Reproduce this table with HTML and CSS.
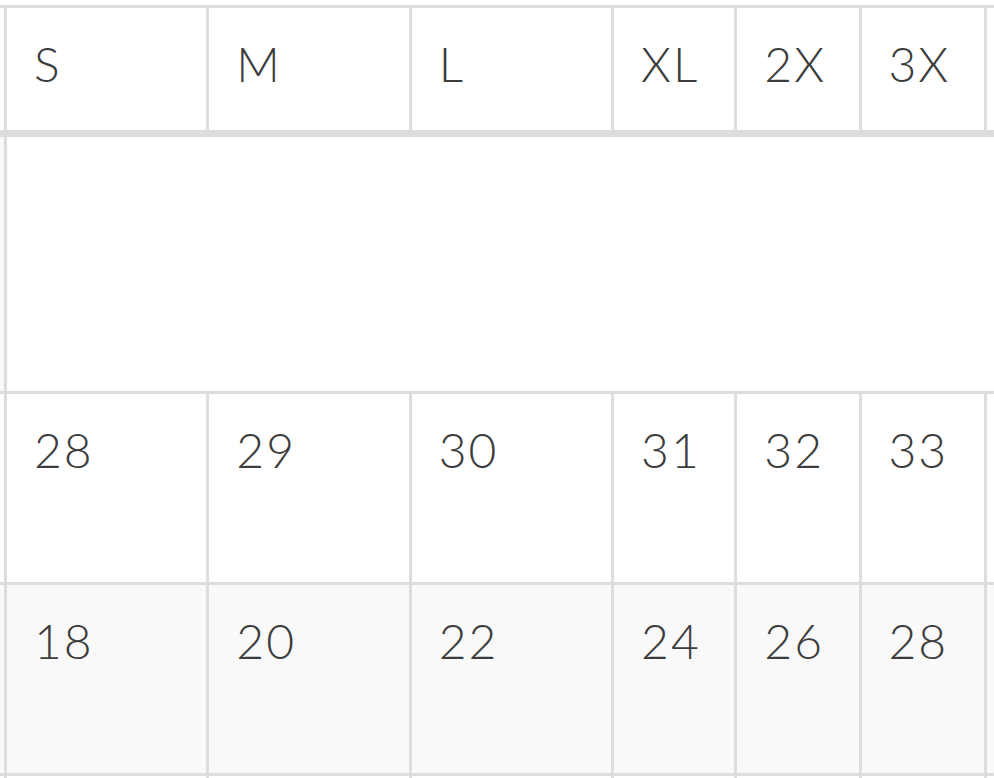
FILE: index.html
```html
<!DOCTYPE html>
<html lang="en">
<head>
<meta charset="utf-8">
<title>Size chart</title>
<link rel="stylesheet" href="styles.css">
</head>
<body>
<div class="viewport">
  <table class="size-table">
    <thead>
      <tr>
        <th class="stub"></th>
        <th class="col-wide">S</th>
        <th class="col-wide">M</th>
        <th class="col-wide">L</th>
        <th class="col-xl">XL</th>
        <th class="col-2x">2X</th>
        <th class="col-3x">3X</th>
        <th class="col-more"></th>
      </tr>
    </thead>
    <tbody>
      <tr class="row-blank">
        <td class="stub"></td>
        <td class="blank-cell" colspan="7"></td>
      </tr>
      <tr class="row-data">
        <td class="stub"></td>
        <td>28</td>
        <td>29</td>
        <td>30</td>
        <td>31</td>
        <td>32</td>
        <td>33</td>
        <td></td>
      </tr>
      <tr class="row-data row-striped">
        <td class="stub"></td>
        <td>18</td>
        <td>20</td>
        <td>22</td>
        <td>24</td>
        <td>26</td>
        <td>28</td>
        <td></td>
      </tr>
      <tr class="row-data">
        <td class="stub"></td>
        <td></td>
        <td></td>
        <td></td>
        <td></td>
        <td></td>
        <td></td>
        <td></td>
      </tr>
    </tbody>
  </table>
</div>
</body>
</html>
```

FILE: styles.css
```css
html, body {
  margin: 0;
  padding: 0;
  background: #ffffff;
  overflow: hidden;
}

.viewport {
  width: 994px;
  height: 778px;
  overflow: hidden;
  padding-top: 5px;
  box-sizing: border-box;
}

.size-table {
  border-collapse: separate;
  border-spacing: 0;
  table-layout: fixed;
  width: 1107px;
  font-family: Lato, "Open Sans", sans-serif;
  font-weight: 300;
  font-size: 48px;
  line-height: 72px;
  letter-spacing: 2px;
  color: #3c3c3c;
}

.size-table th,
.size-table td {
  box-sizing: border-box;
  border-left: 3px solid #dddddd;
  padding: 20px 0 0 27px;
  text-align: left;
  vertical-align: top;
  font-weight: 300;
}

.size-table .stub {
  border-left: 0;
  padding: 0;
  width: 4px;
}

.col-wide { width: 202px; }
.col-xl   { width: 123px; }
.col-2x   { width: 124px; }
.col-3x   { width: 125px; }
.col-more { width: 123px; }

.size-table thead th {
  border-top: 3px solid #dddddd;
  border-bottom: 7px solid #dddddd;
  height: 132px;
  background: #ffffff;
}

.row-blank td {
  height: 254px;
  background: #f9f9f9;
}

.row-blank .blank-cell {
  background: #ffffff;
}

.row-data td {
  border-top: 3px solid #dddddd;
  height: 191px;
  background: #ffffff;
}

.row-striped td {
  background: #f9f9f9;
}
```
